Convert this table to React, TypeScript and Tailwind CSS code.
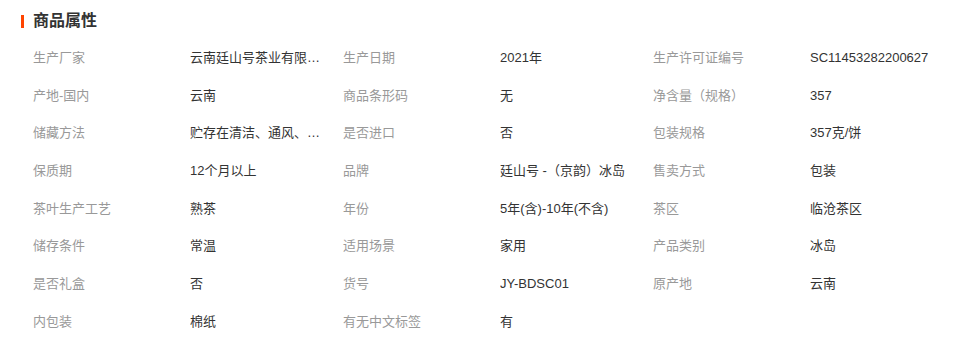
const rows: [string, string][][] = [
  [['生产厂家', '云南廷山号茶业有限公司'], ['生产日期', '2021年'], ['生产许可证编号', 'SC11453282200627']],
  [['产地-国内', '云南'], ['商品条形码', '无'], ['净含量（规格）', '357']],
  [['储藏方法', '贮存在清洁、通风、干燥、无异味处'], ['是否进口', '否'], ['包装规格', '357克/饼']],
  [['保质期', '12个月以上'], ['品牌', '廷山号 -（京韵）冰岛'], ['售卖方式', '包装']],
  [['茶叶生产工艺', '熟茶'], ['年份', '5年(含)-10年(不含)'], ['茶区', '临沧茶区']],
  [['储存条件', '常温'], ['适用场景', '家用'], ['产品类别', '冰岛']],
  [['是否礼盒', '否'], ['货号', 'JY-BDSC01'], ['原产地', '云南']],
  [['内包装', '棉纸'], ['有无中文标签', '有'], ['', '']],
]

export default function App() {
  return (
    <div
      className="w-[978px] h-[349px] bg-white overflow-hidden"
      style={{ fontFamily: '"Liberation Sans", "Noto Sans CJK SC", sans-serif' }}
    >
      {/* Title */}
      <div className="pt-[13px] pb-[10px] pl-[21px] flex items-center">
        <span className="w-[3px] h-[13px] bg-[#ff4400]" />
        <h2 className="ml-[9px] text-[16px] leading-[16px] font-bold text-[#333]">商品属性</h2>
      </div>

      {/* Attribute grid */}
      <ul className="pl-[33px]">
        {rows.map((row, i) => (
          <li key={i} className="h-[37.7px] flex items-center text-[13px] leading-[16px]">
            {row.map(([label, value], j) => (
              <div key={j} className="flex w-[310px]">
                <span className="w-[157px] text-[#999] whitespace-nowrap">{label}</span>
                <span className="w-[131px] text-[#333] whitespace-nowrap overflow-hidden text-ellipsis">
                  {value}
                </span>
              </div>
            ))}
          </li>
        ))}
      </ul>
    </div>
  )
}
